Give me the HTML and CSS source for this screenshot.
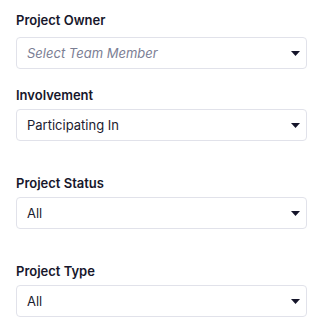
FILE: index.html
```html
<!DOCTYPE html>
<html lang="en">
<head>
<meta charset="utf-8">
<title>Filters</title>
<link rel="stylesheet" href="styles.css">
</head>
<body>
<div class="filters">
  <div class="field field--first">
    <div class="label">Project Owner</div>
    <div class="select">
      <span class="placeholder">Select Team Member</span>
      <svg class="caret" width="9" height="5" viewBox="0 0 9 5"><path d="M0 0H9L4.5 5Z"/></svg>
    </div>
  </div>
  <div class="field">
    <div class="label">Involvement</div>
    <div class="select">
      <span class="value">Participating In</span>
      <svg class="caret" width="9" height="5" viewBox="0 0 9 5"><path d="M0 0H9L4.5 5Z"/></svg>
    </div>
  </div>
  <div class="field field--spaced">
    <div class="label">Project Status</div>
    <div class="select">
      <span class="value">All</span>
      <svg class="caret" width="9" height="5" viewBox="0 0 9 5"><path d="M0 0H9L4.5 5Z"/></svg>
    </div>
  </div>
  <div class="field field--spaced">
    <div class="label">Project Type</div>
    <div class="select">
      <span class="value">All</span>
      <svg class="caret" width="9" height="5" viewBox="0 0 9 5"><path d="M0 0H9L4.5 5Z"/></svg>
    </div>
  </div>
</div>
</body>
</html>
```
FILE: styles.css
```css
html, body {
  margin: 0;
  padding: 0;
  background: #ffffff;
}
body {
  font-family: Inter, "Noto Sans", sans-serif;
  color: #1b1b2f;
}
.filters {
  display: flex;
  flex-direction: column;
  padding: 10px 14px 0 16px;
}
.field {
  display: flex;
  flex-direction: column;
  gap: 4px;
  margin-top: 16px;
}
.field--first {
  margin-top: 0;
  gap: 7px;
}
.field--spaced {
  margin-top: 32px;
}
.label {
  font-size: 13px;
  font-weight: 600;
  line-height: 20px;
  color: #17172b;
}
.select {
  height: 32px;
  box-sizing: border-box;
  border: 1px solid #e1e2ea;
  border-radius: 4px;
  display: flex;
  align-items: center;
  justify-content: space-between;
  padding: 0 6px 0 10px;
  font-size: 13px;
}
.placeholder {
  font-style: italic;
  color: #7b7e94;
}
.value {
  color: #1b1b2f;
}
.caret {
  fill: #15152a;
  display: block;
}
```
